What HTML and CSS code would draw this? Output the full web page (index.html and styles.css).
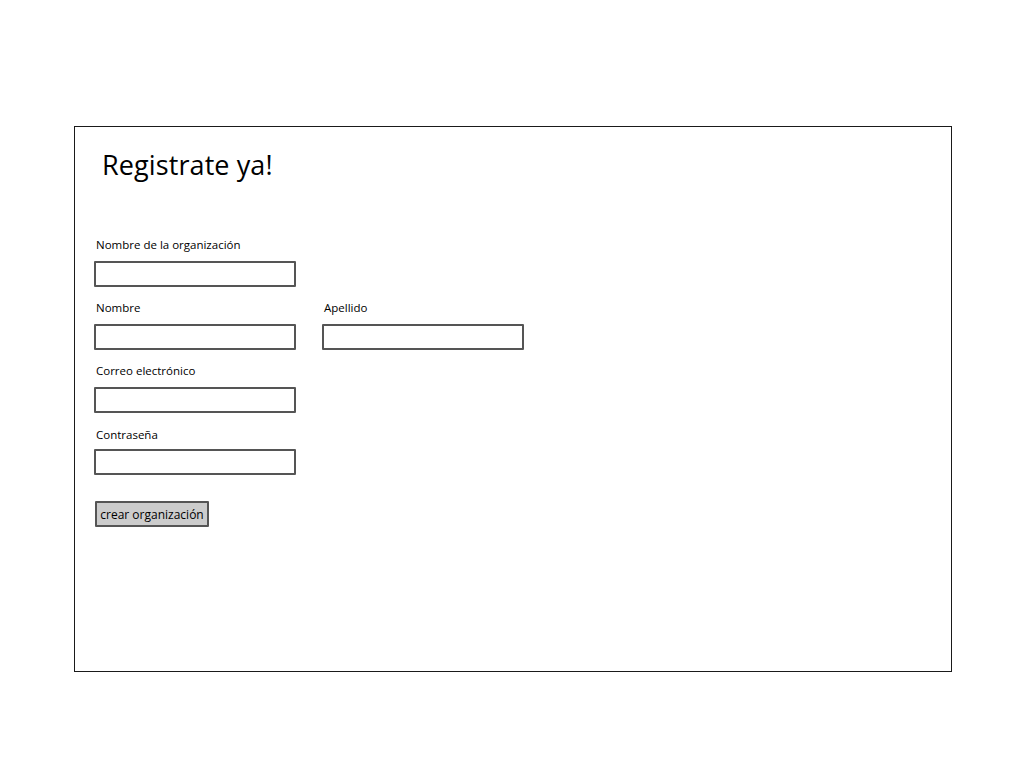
FILE: index.html
```html
<!DOCTYPE html>
<html lang="es">
<head>
<meta charset="utf-8">
<title>Registrate ya!</title>
<link rel="stylesheet" href="styles.css">
</head>
<body>
<main class="frame">
  <h1 class="title">Registrate ya!</h1>
  <form class="form">
    <div class="field">
      <label class="label">Nombre de la organización</label>
      <input class="input" type="text">
    </div>
    <div class="row">
      <div class="field">
        <label class="label">Nombre</label>
        <input class="input" type="text">
      </div>
      <div class="field">
        <label class="label">Apellido</label>
        <input class="input" type="text">
      </div>
    </div>
    <div class="field">
      <label class="label">Correo electrónico</label>
      <input class="input" type="text">
    </div>
    <div class="field field-tight">
      <label class="label">Contraseña</label>
      <input class="input" type="password">
    </div>
    <div class="actions">
      <button class="button" type="button">crear organización</button>
    </div>
  </form>
</main>
</body>
</html>
```

FILE: styles.css
```css
html, body {
  margin: 0;
  padding: 0;
  background: #ffffff;
}

body {
  padding: 126px 0 0 74px;
  font-family: "Comic Sans MS", "Open Sans", "DejaVu Sans", sans-serif;
  color: #000;
}

.frame {
  box-sizing: border-box;
  width: 878px;
  height: 546px;
  border: 1px solid #1a1a1a;
  padding: 0 0 0 19px;
}

.title {
  margin: 20px 0 0 8px;
  font-size: 27px;
  line-height: 36px;
  height: 36px;
  font-weight: 400;
  letter-spacing: 0.1px;
}

.form {
  margin-top: 54px;
  display: flex;
  flex-direction: column;
  gap: 13px;
}

.row {
  display: flex;
  gap: 26px;
}

.field {
  display: flex;
  flex-direction: column;
  gap: 8px;
  width: 202px;
}

.field-tight {
  gap: 6px;
  margin-top: 1px;
}

.label {
  display: block;
  height: 16px;
  line-height: 16px;
  font-size: 11.5px;
  padding-left: 2px;
  white-space: nowrap;
}

.input {
  box-sizing: border-box;
  width: 202px;
  height: 26px;
  margin: 0;
  border: 2px solid #555;
  border-radius: 1px;
  background: #fff;
  padding: 0 4px;
}

.actions {
  margin-top: 13px;
}

.button {
  box-sizing: border-box;
  height: 26px;
  width: 114px;
  margin: 0 0 0 1px;
  padding: 0;
  border: 2px solid #555;
  border-radius: 1px;
  background: #cccccc;
  font-family: inherit;
  font-size: 12px;
  color: #000;
}
```
